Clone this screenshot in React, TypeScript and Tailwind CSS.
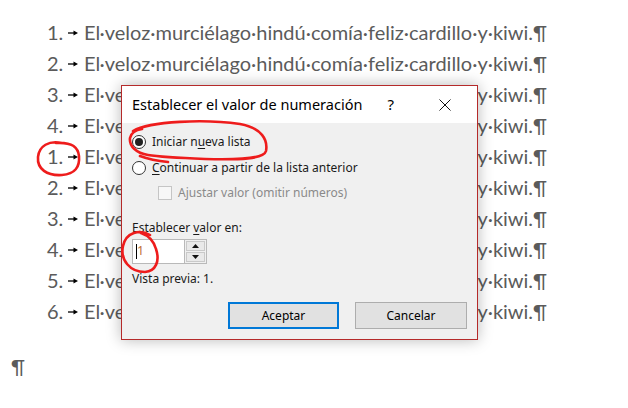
import React from "react";

const SENTENCE = "El·veloz·murciélago·hindú·comía·feliz·cardillo·y·kiwi.¶";
const NUMBERS = ["1.", "2.", "3.", "4.", "1.", "2.", "3.", "4.", "5.", "6."];

function TabArrow() {
  return (
    <svg width="10" height="6" viewBox="0 0 10 6" className="mt-[3px]">
      <path d="M0 3 H6" stroke="#000" strokeWidth="1.3" />
      <path d="M5.5 0.5 L10 3 L5.5 5.5 Z" fill="#000" />
    </svg>
  );
}

function ListLine({ n }: { n: string }) {
  return (
    <div className="flex h-[31px] items-center whitespace-nowrap">
      <span className="w-[47px]" />
      <span className="w-[21px]">{n}</span>
      <span className="flex w-[16px] items-center">
        <TabArrow />
      </span>
      <span>{SENTENCE}</span>
    </div>
  );
}

function Radio({ checked }: { checked?: boolean }) {
  return (
    <span className="flex h-[14px] w-[14px] items-center justify-center rounded-full border border-[#333] bg-white">
      {checked && <span className="h-[8px] w-[8px] rounded-full bg-[#222]" />}
    </span>
  );
}

function Dialog() {
  return (
    <div className="absolute left-[121px] top-[85px] flex h-[255px] w-[357px] flex-col border border-[#b52a2a] bg-[#f0f0f0] font-['Noto_Sans',sans-serif] text-[12px] text-[#1a1a1a] shadow-[0_0_14px_rgba(0,0,0,0.28)]">
      {/* title bar */}
      <div className="flex h-[37px] shrink-0 items-center bg-white pl-[10px]">
        <span className="text-[14.5px] text-black">Establecer el valor de numeración</span>
        <span className="ml-[25px] text-[15px] text-black">?</span>
        <svg className="ml-[45px]" width="12" height="12" viewBox="0 0 12 12">
          <path d="M0.5 0.5 L11.5 11.5 M11.5 0.5 L0.5 11.5" stroke="#111" strokeWidth="1" />
        </svg>
      </div>

      {/* body */}
      <div className="flex flex-1 flex-col px-[10px]">
        <div className="mt-[6px] flex h-[26px] items-center gap-[6px]">
          <Radio checked />
          <span>
            Iniciar n<span className="underline underline-offset-2">u</span>eva lista
          </span>
        </div>
        <div className="flex h-[26px] items-center gap-[6px]">
          <Radio />
          <span>
            <span className="underline underline-offset-2">C</span>ontinuar a partir de la lista anterior
          </span>
        </div>
        <div className="flex h-[24px] items-center gap-[6px] pl-[26px]">
          <span className="h-[14px] w-[14px] border border-[#c5c5c5] bg-[#f7f7f7]" />
          <span className="text-[#8a8a8a]">Ajustar valor (omitir números)</span>
        </div>

        <div className="mt-[14px] flex h-[18px] items-center">
          Establecer <span className="ml-[3px] underline underline-offset-2">v</span>alor en:
        </div>
        <div className="mt-[2px] flex h-[25px] w-[75px] items-center border border-[#b9b9b9] bg-white">
          <div className="flex flex-1 items-center pl-[3px]">
            <span className="h-[15px] w-px bg-black" />
            <span className="text-[12.5px] text-[#c0703a]">1</span>
          </div>
          <div className="flex h-full w-[22px] flex-col gap-px border-l border-[#b9b9b9] bg-[#f0f0f0] p-px">
            <span className="flex flex-1 items-center justify-center border border-[#c9c9c9] bg-[#e9e9e9]">
              <svg width="7" height="4" viewBox="0 0 7 4"><path d="M0 4 L3.5 0 L7 4 Z" fill="#111" /></svg>
            </span>
            <span className="flex flex-1 items-center justify-center border border-[#c9c9c9] bg-[#e9e9e9]">
              <svg width="7" height="4" viewBox="0 0 7 4"><path d="M0 0 L3.5 4 L7 0 Z" fill="#111" /></svg>
            </span>
          </div>
        </div>
        <div className="mt-[6px] flex h-[18px] items-center">Vista previa: 1.</div>

        <div className="mt-[14px] flex justify-end gap-[16px]">
          <button className="h-[27px] w-[111px] border-2 border-[#0078d7] bg-[#e1e1e1] text-[12px] text-black">
            Aceptar
          </button>
          <button className="h-[27px] w-[112px] border border-[#adadad] bg-[#e1e1e1] text-[12px] text-black">
            Cancelar
          </button>
        </div>
      </div>
    </div>
  );
}

function Annotations() {
  return (
    <svg className="pointer-events-none absolute left-0 top-0" width="628" height="408" viewBox="0 0 628 408" fill="none">
      <g stroke="#ee1c1c" strokeWidth="2.6" strokeLinecap="round" strokeLinejoin="round">
        <path d="M62 143 C49 140 39 146 38 157 C37 169 47 176 62 175 C75 174 80 167 79 156 C78 147 72 142 56 143" />
        <path d="M133 131 C150 121 205 119 240 124 C262 128 268 140 266 151 C264 159 240 160 205 159 C180 158 160 157 148 155 C136 153 129 146 130 138 C131 133 136 130 142 129 M140 156 C148 159 158 161 168 162" />
        <path d="M150 235 C140 229 126 232 123 246 C120 260 130 272 145 272 C156 271 160 261 156 249 C154 242 150 236 141 233" />
      </g>
    </svg>
  );
}

export default function App() {
  return (
    <div className="relative h-[408px] w-[628px] overflow-hidden bg-white font-['Lato',sans-serif] text-[20px] text-[#5b5b5b]">
      <div className="flex flex-col pt-[16px]">
        {NUMBERS.map((n, i) => (
          <ListLine key={i} n={n} />
        ))}
        <div className="mt-[24px] flex h-[31px] items-center pl-[11px]">¶</div>
      </div>
      <Dialog />
      <Annotations />
    </div>
  );
}
